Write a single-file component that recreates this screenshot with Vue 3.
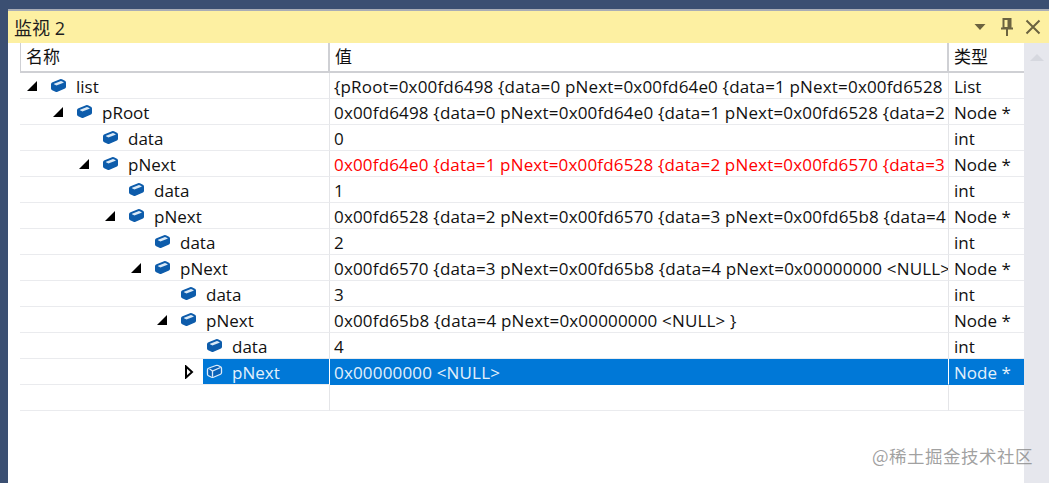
<script setup>
const rows = [
  { level: 0, name: 'list', value: '{pRoot=0x00fd6498 {data=0 pNext=0x00fd64e0 {data=1 pNext=0x00fd6528', type: 'List', arrow: 'open' },
  { level: 1, name: 'pRoot', value: '0x00fd6498 {data=0 pNext=0x00fd64e0 {data=1 pNext=0x00fd6528 {data=2', type: 'Node *', arrow: 'open' },
  { level: 2, name: 'data', value: '0', type: 'int' },
  { level: 2, name: 'pNext', value: '0x00fd64e0 {data=1 pNext=0x00fd6528 {data=2 pNext=0x00fd6570 {data=3', type: 'Node *', arrow: 'open', changed: true },
  { level: 3, name: 'data', value: '1', type: 'int' },
  { level: 3, name: 'pNext', value: '0x00fd6528 {data=2 pNext=0x00fd6570 {data=3 pNext=0x00fd65b8 {data=4', type: 'Node *', arrow: 'open' },
  { level: 4, name: 'data', value: '2', type: 'int' },
  { level: 4, name: 'pNext', value: '0x00fd6570 {data=3 pNext=0x00fd65b8 {data=4 pNext=0x00000000 <NULL>', type: 'Node *', arrow: 'open' },
  { level: 5, name: 'data', value: '3', type: 'int' },
  { level: 5, name: 'pNext', value: '0x00fd65b8 {data=4 pNext=0x00000000 <NULL> }', type: 'Node *', arrow: 'open' },
  { level: 6, name: 'data', value: '4', type: 'int' },
  { level: 6, name: 'pNext', value: '0x00000000 <NULL>', type: 'Node *', arrow: 'closed', selected: true },
]
const indent = (level) => ({ paddingLeft: `${level * 26}px` })
</script>

<template>
  <div class="page">
    <div class="topband"></div>
    <div class="body">
      <div class="panel">
        <div class="title">
          <span class="title-text">监视 2</span>
          <div class="title-tools">
            <svg class="drop" width="12" height="16" viewBox="0 0 12 16"><path d="M0.5 5h11L6 11z" fill="#6b6340" /></svg>
            <svg width="14" height="20" viewBox="0 0 14 20" fill="none" stroke="#6b6340" stroke-width="2"><path d="M3.5 2h7v9h-7zM1 11.5h12M7 12v7M8.5 3v8" /></svg>
            <svg width="16" height="16" viewBox="0 0 16 16" fill="none" stroke="#6b6340" stroke-width="2"><path d="M1.5 1.5l13 13M14.5 1.5l-13 13" /></svg>
          </div>
        </div>
        <div class="content">
          <div class="table">
            <div class="header">
              <div class="gutter"></div>
              <div class="hcell first">名称</div>
              <div class="hcell">值</div>
              <div class="hcell">类型</div>
            </div>
            <div v-for="(r, i) in rows" :key="i" class="row" :class="{ selected: r.selected }">
              <div class="gutter"></div>
              <div class="cell name" :style="indent(r.level)">
                <span class="arrow">
                  <svg v-if="r.arrow === 'open'" width="12" height="12" viewBox="0 0 12 12"><path d="M11 1V11H1z" fill="#000" /></svg>
                  <svg v-else-if="r.arrow === 'closed'" width="12" height="14" viewBox="0 0 12 14"><path d="M4 1.5l6 5.5-6 5.5z" fill="#fff" stroke="#000" stroke-width="2" /></svg>
                </span>
                <span class="name-main">
                  <svg class="cube" width="17" height="15" viewBox="0 0 17 17" preserveAspectRatio="none">
                    <template v-if="r.selected">
                      <path d="M1.5 6.5Q1.5 5 3 4.5L10 1.7Q11 1.3 12 1.8L14.5 3.2Q15.5 3.8 15.5 5V10Q15.5 11 14.5 11.7L7.5 15Q6.5 15.4 5.5 15L2.5 13.3Q1.5 12.8 1.5 11.5z" fill="#0a62b8" stroke="#dcecfa" stroke-width="1.3" />
                      <path d="M3.5 5.5L6.5 8l8-4" fill="none" stroke="#dcecfa" stroke-width="1.3" />
                      <path d="M6.5 8v6.5" fill="none" stroke="#dcecfa" stroke-width="1.3" />
                    </template>
                    <template v-else>
                      <path d="M1 7Q1 5.5 2.5 4.8L10 1.3Q11 .9 12 1.4L15 3Q16 3.6 16 5V10Q16 11.2 15 12L7.5 15.6Q6.5 16 5.5 15.6L2.2 13.8Q1 13 1 11.8z" fill="#0d5cab" />
                      <path d="M4 6.6L10.3 3.6Q11 3.3 11.7 3.7L13.6 4.7Q14 5 13.5 5.3L7 8.3Q6.5 8.5 6 8.2L4 7.2Q3.6 6.9 4 6.6z" fill="#dbeaf7" />
                    </template>
                  </svg>
                  <span class="label">{{ r.name }}</span>
                </span>
              </div>
              <div class="cell value" :class="{ changed: r.changed }">{{ r.value }}</div>
              <div class="cell type">{{ r.type }}</div>
            </div>
            <div class="row empty">
              <div class="gutter"></div>
              <div class="cell name"></div>
              <div class="cell value"></div>
              <div class="cell type"></div>
            </div>
          </div>
          <div class="scrollbar">
            <svg width="14" height="10" viewBox="0 0 14 10"><path d="M0 9L7 2l7 7z" fill="#d6d8df" /></svg>
          </div>
        </div>
      </div>
    </div>
    <div class="watermark">@稀土掘金技术社区</div>
  </div>
</template>

<style scoped>
.page {
  position: relative;
  width: 1049px;
  height: 483px;
  overflow: hidden;
  background: #3b4f72;
  font-family: "Open Sans", "Noto Sans CJK SC", sans-serif;
  color: #111;
  display: flex;
  flex-direction: column;
}
.topband { height: 9px; flex: none; }
.body { flex: 1; display: flex; padding-left: 8px; min-height: 0; }
.panel {
  flex: 1;
  display: flex;
  flex-direction: column;
  border-top: 2px solid #a9adb6;
  min-width: 0;
}
.title {
  height: 32px;
  flex: none;
  background: #fdf0a2;
  display: flex;
  align-items: center;
  justify-content: space-between;
  padding: 0 8px 0 6px;
}
.title-text { font-size: 18px; color: #1e1e1e; }
.title-tools { display: flex; align-items: center; gap: 11px; }
.drop { margin-right: 3px; }
.content { flex: 1; display: flex; background: #fff; min-height: 0; }
.table { width: 1016px; flex: none; }
.header, .row {
  display: grid;
  grid-template-columns: 12px 310px 619px 75px;
}
.header { height: 30px; }
.hcell {
  font-size: 17px;
  line-height: 28px;
  padding-left: 5px;
  border-right: 2px solid #cfd0d4;
  border-bottom: 2px solid #cfd0d4;
  box-sizing: border-box;
  white-space: nowrap;
  overflow: hidden;
}
.hcell.first { border-left: 1px solid #cfd0d4; }
.hcell:last-child { border-right: none; }
.row { height: 26px; }
.cell {
  font-size: 17px;
  line-height: 27px;
  white-space: nowrap;
  overflow: hidden;
  box-sizing: border-box;
  border-right: 1px solid #e4e5e8;
  border-bottom: 1px solid #eaebee;
}
.cell.value { padding-left: 4px; letter-spacing: 0.17px; }
.cell.type { padding-left: 5px; border-right: none; }
.changed { color: #f00; }
.name { display: flex; align-items: center; }
.arrow {
  width: 12px;
  margin-left: 6px;
  margin-right: 5px;
  flex: none;
  display: flex;
  align-items: center;
  height: 25px;
}
.name-main {
  flex: 1;
  display: flex;
  align-items: center;
  height: 100%;
  padding-left: 7px;
}
.label { position: relative; top: 1px; }
.cube { flex: none; margin-right: 9px; }
.selected .cell { background: #0078d7; color: #e3f0fb; border-right-color: #fff; border-bottom-color: #0078d7; }
.selected .cell.name { background: #fff; border-bottom-color: #eaebee; }
.selected .name-main { background: #0078d7; height: 26px; color: #e3f0fb; padding-left: 3px; margin-left: 4px; }
.scrollbar {
  flex: 1;
  background: #e6e7ed;
  display: flex;
  justify-content: center;
  padding-top: 9px;
  align-items: flex-start;
}
.watermark {
  position: absolute;
  right: 16px;
  bottom: 15px;
  font-size: 17.5px;
  color: rgba(130, 130, 130, 0.75);
  font-family: "Noto Sans CJK SC", sans-serif;
  letter-spacing: 0.5px;
}
</style>
